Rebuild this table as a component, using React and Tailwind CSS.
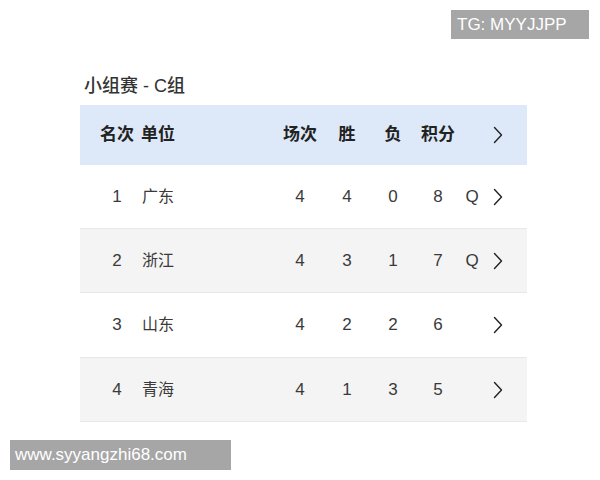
const rows = [
  { rank: 1, name: '广东', p: 4, w: 4, l: 0, pts: 8, q: true, bg: 'bg-white', h: 'h-[64px]' },
  { rank: 2, name: '浙江', p: 4, w: 3, l: 1, pts: 7, q: true, bg: 'bg-[#f4f4f4]', h: 'h-[64px]' },
  { rank: 3, name: '山东', p: 4, w: 2, l: 2, pts: 6, q: false, bg: 'bg-white', h: 'h-[65px]' },
  { rank: 4, name: '青海', p: 4, w: 1, l: 3, pts: 5, q: false, bg: 'bg-[#f4f4f4]', h: 'h-[64px]' },
];

function Chevron() {
  return (
    <svg width="10" height="18" viewBox="0 0 10 18" fill="none" stroke="#222" strokeWidth="1.4" strokeLinecap="round" strokeLinejoin="round">
      <path d="M1.5 1.5 L8.5 9 L1.5 16.5" />
    </svg>
  );
}

const grid = 'grid grid-cols-[40px_139px_48px_46px_46px_44px_24px_28px] items-center pl-[17px] pr-[15px]';

export default function App() {
  return (
    <div className="relative w-[600px] h-[480px] bg-white text-[#333] font-['Liberation_Sans','Noto_Sans_CJK_SC',sans-serif] overflow-hidden">
      {/* watermark top */}
      <div className="absolute left-[451px] top-[10px] w-[138px] h-[29px] bg-[#a6a6a6] text-white text-[17px] leading-[29px] pl-[6px]">
        TG: MYYJJPP
      </div>

      <div className="ml-[80px] w-[447px] pt-[74px]">
        <div className="pl-[4px] text-[18px] leading-[24px] font-medium text-[#333]">小组赛 - C组</div>

        {/* header */}
        <div className={`${grid} mt-[7px] h-[60px] bg-[#dde9f8] text-[17px] font-bold text-[#222]`}>
          <div className="text-center">名次</div>
          <div className="pl-[4px]">单位</div>
          <div className="text-center">场次</div>
          <div className="text-center">胜</div>
          <div className="text-center">负</div>
          <div className="text-center">积分</div>
          <div />
          <div className="flex justify-center"><Chevron /></div>
        </div>

        {rows.map((r) => (
          <div key={r.rank} className={`${grid} ${r.h} ${r.bg} border-b border-[#e8e8e8] text-[17px] text-[#3a3a3a]`}>
            <div className="text-center">{r.rank}</div>
            <div className="pl-[5px] text-[16px]">{r.name}</div>
            <div className="text-center">{r.p}</div>
            <div className="text-center">{r.w}</div>
            <div className="text-center">{r.l}</div>
            <div className="text-center">{r.pts}</div>
            <div className="text-center">{r.q ? 'Q' : ''}</div>
            <div className="flex justify-center"><Chevron /></div>
          </div>
        ))}
      </div>

      {/* watermark bottom */}
      <div className="absolute left-[10px] top-[440px] w-[221px] h-[30px] bg-[#a6a6a6] text-white text-[17px] leading-[30px] pl-[5px]">
        www.syyangzhi68.com
      </div>
    </div>
  );
}
